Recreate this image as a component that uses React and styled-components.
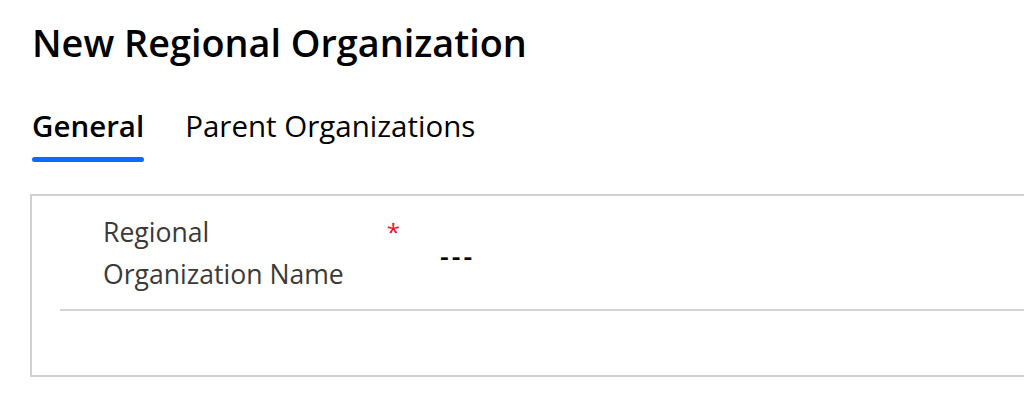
import React from "react";
import styled, { createGlobalStyle } from "styled-components";

const Global = createGlobalStyle`
  html, body { margin: 0; padding: 0; background: #ffffff; }
  body { overflow: hidden; font-family: "Open Sans", "Noto Sans", sans-serif; }
`;

const Page = styled.div`
  width: 1024px;
  height: 416px;
  overflow: hidden;
  box-sizing: border-box;
  padding: 20px 0 0 32px;
`;

const Title = styled.h1`
  margin: 0;
  font-size: 37.8px;
  line-height: 46px;
  font-weight: 600;
  color: #000000;
`;

const TabList = styled.div`
  display: flex;
  gap: 41px;
  margin-top: 41px;
`;

const Tab = styled.div`
  display: flex;
  flex-direction: column;
  gap: 12px;
  font-size: 29.5px;
  line-height: 38px;
  font-weight: ${(p) => (p.$active ? 600 : 400)};
  color: #000000;
`;

const Indicator = styled.span`
  display: block;
  height: 5px;
  border-radius: 3px;
  background: ${(p) => (p.$active ? "#0b6bff" : "transparent")};
`;

const Section = styled.div`
  margin-top: 32px;
  margin-left: -2px;
  width: 1040px;
  border: 2px solid #d1d1d1;
  padding: 0 0 64px 28px;
`;

const Row = styled.div`
  display: flex;
  align-items: center;
  padding: 15px 0 14px 43px;
  border-bottom: 2px solid #d3d3d3;
`;

const LabelCell = styled.div`
  display: flex;
  justify-content: space-between;
  align-items: flex-start;
  width: 297px;
`;

const Label = styled.label`
  max-width: 260px;
  font-size: 26.6px;
  line-height: 42px;
  color: #3b3a39;
`;

const Required = styled.span`
  font-size: 24px;
  line-height: 30px;
  color: #e3172d;
  margin-top: 6px;
`;

const Value = styled.div`
  margin-left: 40px;
  margin-top: 6px;
  font-size: 27px;
  line-height: 42px;
  font-weight: 600;
  letter-spacing: 3px;
  color: #000000;
`;

export default function App() {
  return (
    <>
      <Global />
      <Page>
        <Title>New Regional Organization</Title>
        <TabList>
          <Tab $active>
            <span>General</span>
            <Indicator $active />
          </Tab>
          <Tab>
            <span>Parent Organizations</span>
            <Indicator />
          </Tab>
        </TabList>
        <Section>
          <Row>
            <LabelCell>
              <Label>Regional Organization Name</Label>
              <Required>*</Required>
            </LabelCell>
            <Value>---</Value>
          </Row>
        </Section>
      </Page>
    </>
  );
}
